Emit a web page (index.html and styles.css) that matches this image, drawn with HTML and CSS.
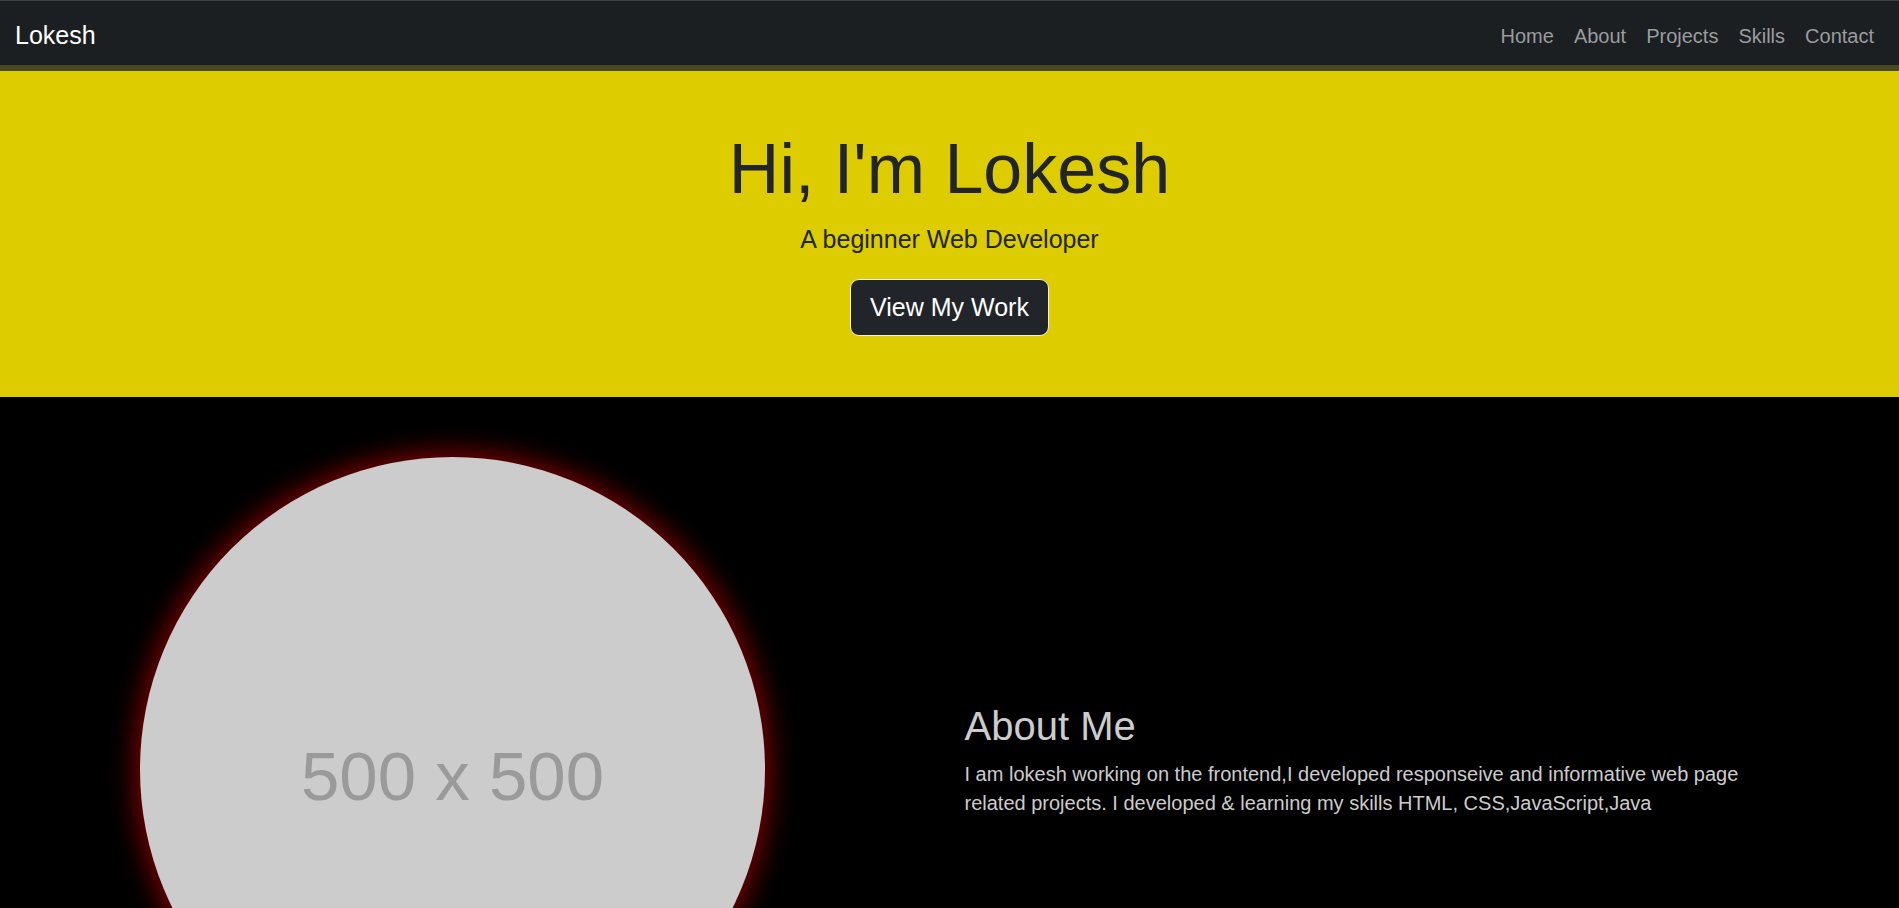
FILE: index.html
```html
<!DOCTYPE html>
<html lang="en">
<head>
<meta charset="utf-8">
<title>Lokesh</title>
<link rel="stylesheet" href="styles.css">
</head>
<body>
<nav class="navbar">
  <a class="brand" href="#">Lokesh</a>
  <ul class="nav-links">
    <li><a href="#">Home</a></li>
    <li><a href="#">About</a></li>
    <li><a href="#">Projects</a></li>
    <li><a href="#">Skills</a></li>
    <li><a href="#">Contact</a></li>
  </ul>
</nav>
<div class="nav-shadow"></div>
<header class="hero">
  <h1 class="hero-title">Hi, I'm Lokesh</h1>
  <p class="hero-lead">A beginner Web Developer</p>
  <a class="btn-work" href="#">View My Work</a>
</header>
<section class="about">
  <div class="about-img-col">
    <div class="placeholder"><span class="placeholder-text">500 x 500</span></div>
  </div>
  <div class="about-text-col">
    <h2 class="about-title">About Me</h2>
    <p class="about-body">I am lokesh working on the frontend,I developed responseive and informative web page related projects. I developed &amp; learning my skills HTML, CSS,JavaScript,Java</p>
  </div>
</section>
</body>
</html>
```

FILE: styles.css
```css
* { box-sizing: border-box; }
html, body {
  margin: 0;
  padding: 0;
}
body {
  font-family: "Liberation Sans", Arial, sans-serif;
  background: #000;
  color: #212529;
  overflow: hidden;
}
a { text-decoration: none; }

.navbar {
  display: flex;
  align-items: center;
  justify-content: space-between;
  height: 65px;
  padding: 12px 15px 7px 15px;
  background: #1c1f22;
  border-top: 1px solid #3d4043;
}
.brand {
  color: #fff;
  font-size: 25px;
  line-height: 37.5px;
}
.nav-links {
  display: flex;
  list-style: none;
  margin: 0;
  padding: 0;
}
.nav-links a {
  display: block;
  padding: 8px 10px;
  font-size: 20px;
  line-height: 30px;
  color: #999c9e;
}
.nav-shadow {
  height: 6px;
  background: #4a4821;
}

.hero {
  background: #dccc00;
  text-align: center;
  padding: 56px 0 61px;
}
.hero-title {
  margin: 0 0 10px;
  font-size: 70px;
  font-weight: 400;
  line-height: 84px;
  color: #212529;
}
.hero-lead {
  margin: 0 0 20px;
  font-size: 25px;
  line-height: 37.5px;
  color: #212529;
}
.btn-work {
  display: inline-block;
  padding: 9px 19px;
  font-size: 25px;
  line-height: 37.5px;
  color: #fff;
  background: #212529;
  border: 1px solid #f0eee0;
  border-radius: 9px;
}

.about {
  display: flex;
  align-items: center;
  padding-top: 60px;
}
.about-img-col {
  width: 949.5px;
  flex: none;
  padding-left: 140px;
}
.placeholder {
  width: 625px;
  height: 625px;
  border-radius: 50%;
  background: #cccccc;
  display: flex;
  align-items: center;
  justify-content: center;
  box-shadow: 0 0 26px 6px rgba(200, 0, 0, 0.6);
}
.placeholder-text {
  font-size: 69px;
  line-height: 1;
  color: #9a9a9a;
  padding-top: 14px;
}
.about-text-col {
  padding-left: 15px;
  width: 815px;
}
.about-title {
  margin: 0 0 10px;
  font-size: 40px;
  font-weight: 400;
  line-height: 48px;
  color: #cccccc;
}
.about-body {
  margin: 0 0 20px;
  font-size: 20px;
  line-height: 29px;
  color: #cccccc;
}
```
